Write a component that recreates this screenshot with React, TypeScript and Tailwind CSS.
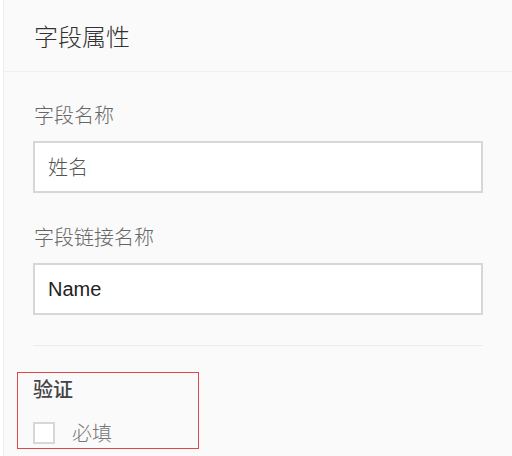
import React from "react";

const font = { fontFamily: '"Liberation Sans", "Noto Sans CJK SC", sans-serif' };
const cjk = { fontFamily: '"Noto Sans CJK SC", sans-serif' };

export default function App() {
  return (
    <div className="w-[512px] h-[456px] bg-white pl-[3px] flex overflow-hidden" style={font}>
      <div className="flex-1 flex flex-col border-l border-[#ececec] bg-[#fafafa]">
        <div className="h-[72px] shrink-0 border-b border-[#efefef] flex items-center px-[30px]">
          <span className="text-[24px] leading-[28px] text-[#333] font-light" style={cjk}>
            字段属性
          </span>
        </div>
        <div className="flex flex-col px-[29px] pt-[31px]">
          <label className="pl-[1px] text-[20px] leading-[24px] text-[#666] font-light" style={cjk}>
            字段名称
          </label>
          <div className="mt-[14px] h-[52px] bg-white border-2 border-[#d6d6db] flex items-center px-[13px]">
            <span className="text-[20px] text-[#555] font-light" style={cjk}>
              姓名
            </span>
          </div>
          <label className="mt-[32px] pl-[1px] text-[20px] leading-[24px] text-[#666] font-light" style={cjk}>
            字段链接名称
          </label>
          <div className="mt-[14px] h-[52px] bg-white border-2 border-[#d6d6db] flex items-center px-[13px]">
            <span className="text-[20px] text-[#222]">Name</span>
          </div>
          <div className="mt-[30px] h-px bg-[#ececec]" />
          <div className="mt-[26px] ml-[-16px] w-[182px] border border-[#e0474c] pl-[15px] pt-[4px] pb-[4px] flex flex-col">
            <span className="text-[20px] leading-[24px] font-medium text-[#444]" style={cjk}>
              验证
            </span>
            <div className="mt-[21px] flex items-center">
              <span className="w-[22px] h-[22px] bg-white border-2 border-[#d6d6db]" />
              <span className="ml-[17px] text-[20px] leading-[22px] text-[#777] font-light" style={cjk}>
                必填
              </span>
            </div>
          </div>
        </div>
      </div>
    </div>
  );
}
